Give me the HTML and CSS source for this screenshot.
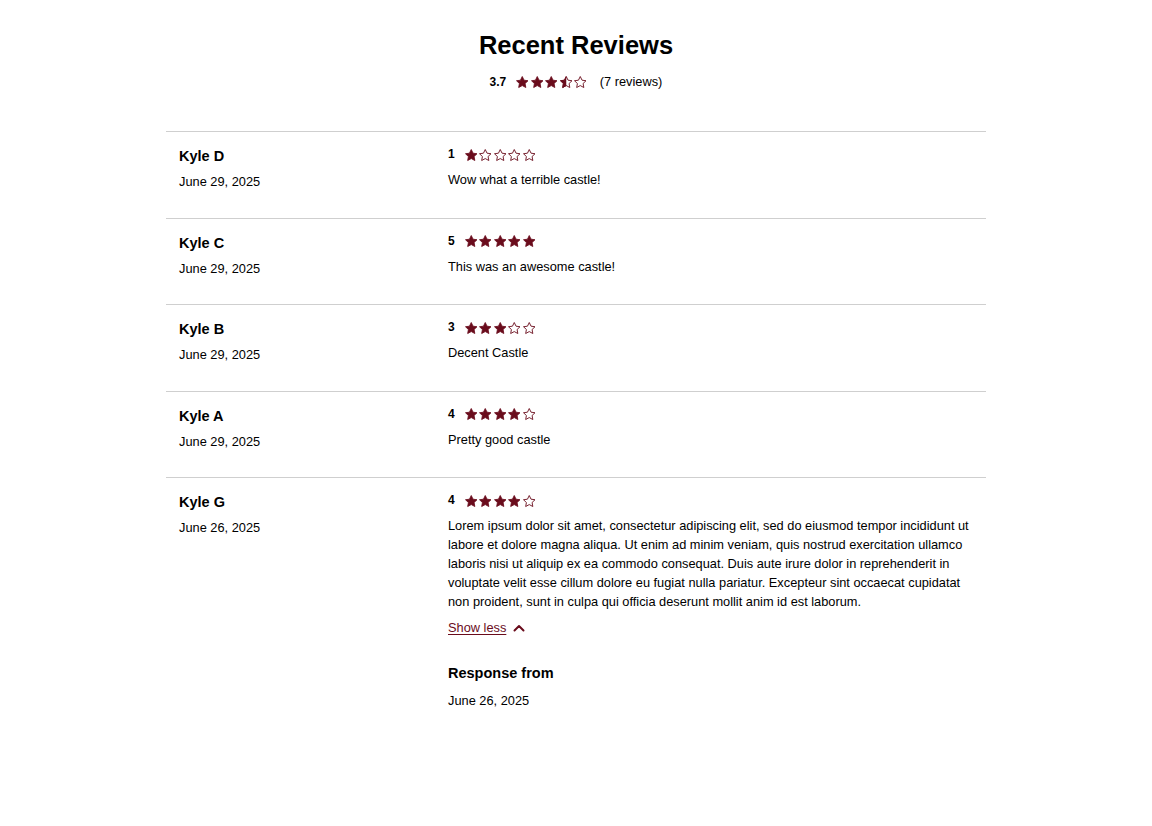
FILE: index.html
```html
<!DOCTYPE html>
<html lang="en">
<head>
<meta charset="utf-8">
<title>Recent Reviews</title>
<link rel="stylesheet" href="styles.css">
</head>
<body>
<svg class="defs" width="0" height="0" aria-hidden="true">
  <defs>
    <path id="star" d="M12 2.5l2.95 6.1 6.55.9-4.8 4.6 1.2 6.6L12 17.5l-5.9 3.2 1.2-6.6-4.8-4.6 6.55-.9z"/>
    <clipPath id="half"><rect x="0" y="0" width="12" height="24"/></clipPath>
  </defs>
</svg>
<main class="reviews">
  <header class="reviews-head">
    <h1 class="title">Recent Reviews</h1>
    <div class="summary">
      <span class="score">3.7</span>
      <span class="stars">
        <svg viewBox="0 0 24 24" class="star full"><use href="#star"/></svg>
        <svg viewBox="0 0 24 24" class="star full"><use href="#star"/></svg>
        <svg viewBox="0 0 24 24" class="star full"><use href="#star"/></svg>
        <svg viewBox="0 0 24 24" class="star halfstar"><use href="#star" class="outline"/><use href="#star" class="fillhalf" clip-path="url(#half)"/></svg>
        <svg viewBox="0 0 24 24" class="star empty"><use href="#star"/></svg>
      </span>
      <span class="count">(7 reviews)</span>
    </div>
  </header>

  <section class="list">
    <article class="review">
      <div class="author">
        <div class="name">Kyle D</div>
        <div class="date">June 29, 2025</div>
      </div>
      <div class="body">
        <div class="rating"><span class="num">1</span>
          <span class="stars">
            <svg viewBox="0 0 24 24" class="star full"><use href="#star"/></svg>
            <svg viewBox="0 0 24 24" class="star empty"><use href="#star"/></svg>
            <svg viewBox="0 0 24 24" class="star empty"><use href="#star"/></svg>
            <svg viewBox="0 0 24 24" class="star empty"><use href="#star"/></svg>
            <svg viewBox="0 0 24 24" class="star empty"><use href="#star"/></svg>
          </span>
        </div>
        <p class="text">Wow what a terrible castle!</p>
      </div>
    </article>

    <article class="review">
      <div class="author">
        <div class="name">Kyle C</div>
        <div class="date">June 29, 2025</div>
      </div>
      <div class="body">
        <div class="rating"><span class="num">5</span>
          <span class="stars">
            <svg viewBox="0 0 24 24" class="star full"><use href="#star"/></svg>
            <svg viewBox="0 0 24 24" class="star full"><use href="#star"/></svg>
            <svg viewBox="0 0 24 24" class="star full"><use href="#star"/></svg>
            <svg viewBox="0 0 24 24" class="star full"><use href="#star"/></svg>
            <svg viewBox="0 0 24 24" class="star full"><use href="#star"/></svg>
          </span>
        </div>
        <p class="text">This was an awesome castle!</p>
      </div>
    </article>

    <article class="review">
      <div class="author">
        <div class="name">Kyle B</div>
        <div class="date">June 29, 2025</div>
      </div>
      <div class="body">
        <div class="rating"><span class="num">3</span>
          <span class="stars">
            <svg viewBox="0 0 24 24" class="star full"><use href="#star"/></svg>
            <svg viewBox="0 0 24 24" class="star full"><use href="#star"/></svg>
            <svg viewBox="0 0 24 24" class="star full"><use href="#star"/></svg>
            <svg viewBox="0 0 24 24" class="star empty"><use href="#star"/></svg>
            <svg viewBox="0 0 24 24" class="star empty"><use href="#star"/></svg>
          </span>
        </div>
        <p class="text">Decent Castle</p>
      </div>
    </article>

    <article class="review">
      <div class="author">
        <div class="name">Kyle A</div>
        <div class="date">June 29, 2025</div>
      </div>
      <div class="body">
        <div class="rating"><span class="num">4</span>
          <span class="stars">
            <svg viewBox="0 0 24 24" class="star full"><use href="#star"/></svg>
            <svg viewBox="0 0 24 24" class="star full"><use href="#star"/></svg>
            <svg viewBox="0 0 24 24" class="star full"><use href="#star"/></svg>
            <svg viewBox="0 0 24 24" class="star full"><use href="#star"/></svg>
            <svg viewBox="0 0 24 24" class="star empty"><use href="#star"/></svg>
          </span>
        </div>
        <p class="text">Pretty good castle</p>
      </div>
    </article>

    <article class="review">
      <div class="author">
        <div class="name">Kyle G</div>
        <div class="date">June 26, 2025</div>
      </div>
      <div class="body">
        <div class="rating"><span class="num">4</span>
          <span class="stars">
            <svg viewBox="0 0 24 24" class="star full"><use href="#star"/></svg>
            <svg viewBox="0 0 24 24" class="star full"><use href="#star"/></svg>
            <svg viewBox="0 0 24 24" class="star full"><use href="#star"/></svg>
            <svg viewBox="0 0 24 24" class="star full"><use href="#star"/></svg>
            <svg viewBox="0 0 24 24" class="star empty"><use href="#star"/></svg>
          </span>
        </div>
        <p class="text long">Lorem ipsum dolor sit amet, consectetur adipiscing elit, sed do eiusmod tempor incididunt ut labore et dolore magna aliqua. Ut enim ad minim veniam, quis nostrud exercitation ullamco laboris nisi ut aliquip ex ea commodo consequat. Duis aute irure dolor in reprehenderit in voluptate velit esse cillum dolore eu fugiat nulla pariatur. Excepteur sint occaecat cupidatat non proident, sunt in culpa qui officia deserunt mollit anim id est laborum.</p>
        <a class="toggle" href="#">Show less<svg class="chev" viewBox="0 0 12 8"><path d="M1.5 6.5 6 2l4.5 4.5"/></svg></a>
        <div class="response">
          <div class="resp-title">Response from</div>
          <div class="resp-date">June 26, 2025</div>
        </div>
      </div>
    </article>
  </section>
</main>
</body>
</html>
```

FILE: styles.css
```css
* { box-sizing: border-box; }

html, body {
  margin: 0;
  padding: 0;
  background: #fff;
}

body {
  font-family: "Liberation Sans", Arial, Helvetica, sans-serif;
  color: #000;
}

.defs {
  position: absolute;
  width: 0;
  height: 0;
  overflow: hidden;
}

.reviews {
  width: 820px;
  margin: 0 auto;
  padding-top: 30px;
  padding-bottom: 80px;
}

.reviews-head {
  text-align: center;
  margin-bottom: 41px;
}

.title {
  font-size: 25.5px;
  font-weight: 700;
  margin: 0;
  line-height: 30px;
}

.summary {
  margin-top: 14px;
  display: flex;
  align-items: center;
  justify-content: center;
  font-size: 12.8px;
  line-height: 16px;
}

.summary .score {
  font-weight: 700;
  font-size: 12px;
  margin-right: 9px;
}

.summary .count {
  margin-left: 12px;
}

.stars {
  display: inline-flex;
  align-items: center;
  gap: 0;
}

.star {
  width: 14.5px;
  height: 14.5px;
  display: block;
}

.star.full use {
  fill: #6a0c1c;
  stroke: #6a0c1c;
  stroke-width: 1.4;
  stroke-linejoin: round;
}

.star.empty use,
.star.halfstar .outline {
  fill: none;
  stroke: #6a0c1c;
  stroke-width: 1.5;
  stroke-linejoin: round;
}

.star.halfstar .fillhalf {
  fill: #6a0c1c;
  stroke: #6a0c1c;
  stroke-width: 1.4;
  stroke-linejoin: round;
}

.list {
  border-top: 1px solid #cfcfcf;
}

.review {
  display: grid;
  grid-template-columns: 269px 1fr;
  padding: 15px 13px 27.5px;
  border-bottom: 1px solid #cfcfcf;
}

.review:last-child {
  border-bottom: none;
}

.name {
  font-size: 14.5px;
  font-weight: 700;
  line-height: 18px;
}

.date {
  margin-top: 9px;
  font-size: 12.8px;
  line-height: 16px;
}

.rating {
  display: flex;
  align-items: center;
  height: 16px;
}

.rating .num {
  font-weight: 700;
  font-size: 12px;
  margin-right: 9px;
  margin-top: -2px;
}

.text {
  margin: 7px 0 0;
  font-size: 12.8px;
  line-height: 19px;
}

.toggle {
  display: inline-flex;
  align-items: center;
  margin-top: 9px;
  font-size: 12.8px;
  line-height: 16px;
  color: #6a0c1c;
  text-decoration: underline;
  text-underline-offset: 2px;
}

.chev {
  width: 12px;
  height: 8px;
  margin-left: 7px;
}

.chev path {
  fill: none;
  stroke: #6a0c1c;
  stroke-width: 2;
  stroke-linecap: round;
  stroke-linejoin: round;
}

.response {
  margin-top: 28px;
}

.resp-title {
  font-size: 14.5px;
  font-weight: 700;
  line-height: 18px;
}

.resp-date {
  margin-top: 11px;
  font-size: 12.8px;
  line-height: 16px;
}
```
